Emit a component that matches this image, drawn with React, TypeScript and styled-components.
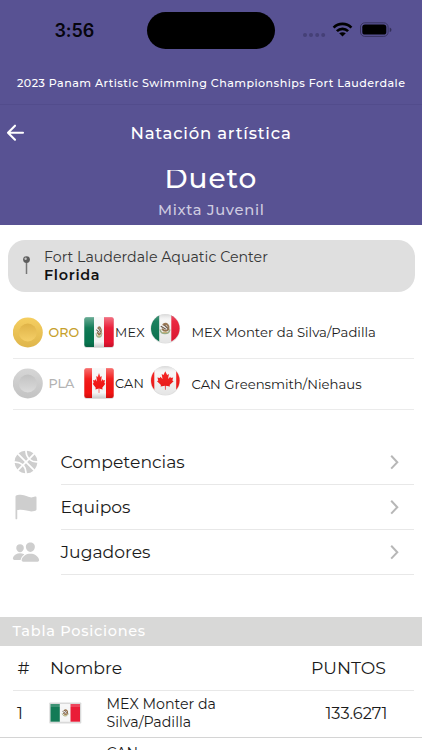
import React from "react";
import styled, { createGlobalStyle } from "styled-components";
import { IoBasketball, IoFlag, IoPeople } from "react-icons/io5";

const GlobalStyle = createGlobalStyle`
  * { box-sizing: border-box; }
  html, body { margin: 0; padding: 0; background: #fff; overflow: hidden; }
  body { font-family: Montserrat, Inter, "Open Sans", sans-serif; color: #1b1b1b; }
`;

const Screen = styled.div`
  width: 422px;
  height: 750px;
  overflow: hidden;
  background: #fff;
  display: flex;
  flex-direction: column;
`;

const Header = styled.header`
  flex: none;
  height: 225px;
  background: #585293;
  color: #fff;
`;

const StatusBar = styled.div`
  height: 60px;
  display: grid;
  grid-template-columns: 147px 128px 1fr;
  align-items: center;
`;

const Clock = styled.time`
  padding-left: 54.5px;
  color: #06050d;
  font-family: Inter, sans-serif;
  font-size: 18px;
  font-weight: 600;
  letter-spacing: -0.1px;
`;

const Island = styled.div`
  height: 37px;
  margin-top: 1px;
  border-radius: 19px;
  background: #000;
`;

const Indicators = styled.div`
  padding-left: 27px;
  svg { display: block; }
`;

const EventTitle = styled.div`
  height: 45px;
  padding: 1px 0 0 17px;
  display: flex;
  align-items: center;
  border-bottom: 1px solid #524c8c;
  font-size: 11.1px;
  font-weight: 500;
  letter-spacing: 0.46px;
  white-space: nowrap;
`;

const NavBar = styled.div`
  height: 56px;
  display: grid;
  grid-template-columns: 130.5px 1fr;
  align-items: center;
`;

const BackButton = styled.button`
  border: 0;
  padding: 0 0 0 6px;
  background: none;
  svg { display: block; }
`;

const NavTitle = styled.h1`
  margin: 0;
  font-size: 16.5px;
  font-weight: 500;
  letter-spacing: 0.78px;
`;

const Category = styled.div`
  height: 55.5px;
  margin-top: 8.5px;
  overflow: hidden;
`;

const CategoryName = styled.h2`
  margin: -6.5px 0 0 164.5px;
  font-size: 28px;
  line-height: 30px;
  font-weight: 500;
  letter-spacing: 0.925px;
`;

const CategoryKind = styled.div`
  margin: 6px 0 0 158px;
  line-height: 22px;
  color: #cfcce0;
  font-size: 14.7px;
  font-weight: 500;
  letter-spacing: 0.7px;
`;

const Venue = styled.section`
  flex: none;
  height: 52px;
  margin: 15px 7.5px 0;
  padding-left: 12px;
  border-radius: 17px;
  background: #dfdfdf;
  display: flex;
  gap: 11.5px;
  align-items: center;
  line-height: 18px;
`;

const VenueName = styled.div`
  color: #363636;
  font-size: 14.21px;
`;

const VenueCity = styled.div`
  color: #111;
  font-size: 14.4px;
  font-weight: 600;
  letter-spacing: 0.7px;
`;

const Podium = styled.section`
  flex: none;
  margin: 15px 8px 0 13px;
`;

const PodiumRow = styled.div`
  height: 51.5px;
  border-bottom: 1.5px solid #ebebeb;
  display: grid;
  grid-template-columns: 35.5px 35.5px 31px 35px 41.5px 1fr;
  align-items: center;
`;

const MedalLabel = styled.span<{ $tone: string }>`
  color: ${(p) => p.$tone};
  font-size: 12.7px;
  font-weight: 500;
`;

const CountryCode = styled.span`
  font-size: 12.8px;
  letter-spacing: 0.25px;
`;

const Badge = styled.div`
  height: 38.5px;
  svg { display: block; }
`;

const PairName = styled.span`
  font-size: 13.22px;
  white-space: nowrap;
`;

const Menu = styled.nav`
  flex: none;
  margin: 30px 8px 0 0;
`;

const MenuItem = styled.div`
  height: 45px;
  display: grid;
  grid-template-columns: 60.5px 1fr;
`;

const MenuIcon = styled.div`
  padding: 0 0 1.5px 12px;
  display: flex;
  align-items: center;
  color: #cecece;
`;

const MenuBody = styled.div`
  display: flex;
  align-items: center;
  justify-content: space-between;
  padding: 0 15.5px 1px 0;
  border-bottom: 1.4px solid #e8e8e8;
`;

const MenuLabel = styled.span`
  font-size: 17.2px;
`;

const SectionBand = styled.h3`
  flex: none;
  margin: 42px 0 0;
  height: 28.5px;
  padding-left: 12.5px;
  display: flex;
  align-items: center;
  background: #d8d8d7;
  color: #fff;
  font-size: 14.5px;
  font-weight: 500;
  letter-spacing: 0.74px;
`;

const TableHead = styled.div`
  flex: none;
  height: 45px;
  margin: 0 8px 0 13px;
  padding-left: 4.5px;
  display: grid;
  grid-template-columns: 32.5px 261px 1fr;
  align-items: center;
  border-bottom: 1.4px solid #e8e8e8;
  font-size: 17.3px;
`;

const TableRow = styled.div`
  flex: none;
  height: 47.5px;
  padding: 0 0 1px 17px;
  display: grid;
  grid-template-columns: 32px 57.5px 219px 1fr;
  align-items: center;
  border-bottom: 1.4px solid #d4d4d4;
`;

const Rank = styled.span`
  font-size: 16.2px;
`;

const FlagFrame = styled.span`
  svg { display: block; }
`;

const TeamName = styled.div`
  font-size: 14.2px;
  line-height: 18.2px;
`;

const Points = styled.span`
  font-size: 16.2px;
`;

const NextRow = styled.div`
  padding: 5.5px 0 0 106.5px;
  font-size: 14.2px;
  line-height: 18px;
`;

const StatusIcons = () => (
  <svg width="92" height="18" viewBox="302 20 92 18">
    <g fill="#454077">
      <circle cx="305" cy="34" r="2" />
      <circle cx="311" cy="34" r="2" />
      <circle cx="317.2" cy="34" r="2" />
      <circle cx="323.2" cy="34" r="2" />
    </g>
    <g fill="none" stroke="#000" strokeWidth="2.7">
      <path d="M333.6 26.6C338.6 21.7 346.4 21.7 351.4 26.6" />
      <path d="M336.9 30.1C340.1 27 344.9 27 348.1 30.1" />
    </g>
    <path d="M342.5 35.6L339.2 32.3C341.2 30.8 343.8 30.8 345.8 32.3Z" />
    <rect x="360.5" y="21.8" width="27.6" height="13.6" rx="4.3" fill="none" stroke="#38345f" />
    <rect x="362.3" y="23.6" width="24" height="10" rx="2.7" />
    <path d="M389.7 26.5C392 27.3 392 30.3 389.7 31.1Z" fill="#332f59" />
  </svg>
);

const BackArrow = () => (
  <svg width="19" height="19" viewBox="0 0 19 19" fill="none" stroke="#fff" strokeWidth="2.1" strokeLinecap="round" strokeLinejoin="round">
    <path d="M9 1.7L2 8.7L9 15.7M2.3 8.7H17" />
  </svg>
);

const Pin = () => (
  <svg width="13" height="22" viewBox="0 0 13 22">
    <path d="M6.5 6V19" stroke="#777" strokeWidth="1.5" />
    <circle cx="6.5" cy="4.6" r="3.4" fill="#5d5d5d" />
    <circle cx="5.6" cy="3.7" r="1.2" fill="#c5c5c5" />
  </svg>
);

const Medal = ({ id, rim, face }: { id: string; rim: [string, string]; face: [string, string] }) => (
  <svg width="31" height="31" viewBox="0 0 31 31">
    <defs>
      <linearGradient id={`${id}-rim`} x1="0" y1="0" x2="0" y2="1">
        <stop offset="0" stopColor={rim[0]} />
        <stop offset="1" stopColor={rim[1]} />
      </linearGradient>
      <linearGradient id={`${id}-face`} x1="0" y1="0" x2="0" y2="1">
        <stop offset="0" stopColor={face[0]} />
        <stop offset="1" stopColor={face[1]} />
      </linearGradient>
    </defs>
    <circle cx="14.8" cy="15.5" r="15" fill={`url(#${id}-rim)`} />
    <circle cx="14.8" cy="15.5" r="9" fill={`url(#${id}-face)`} />
  </svg>
);

type Country = "mx" | "ca";

const MapleLeaf = () => (
  <path
    d="M0-10L-2.2-6L-4.4-7.1L-3.3-1.6L-6-4.1L-6.6-2.6L-9.5-3.1L-8.5-.1L-10 .8L-5.2 4.8L-5.7 6.4L-.5 5.6L-.4 10H.4L.5 5.6L5.7 6.4L5.2 4.8L10 .8L8.5-.1L9.5-3.1L6.6-2.6L6-4.1L3.3-1.6L4.4-7.1L2.2-6Z"
    fill="#f31312"
  />
);

const Eagle = () => (
  <g fill="none" strokeLinecap="round">
    <path d="M-5 1.5C-4.4 6.6 4.4 6.6 5 1.5" stroke="#9bb089" strokeWidth="1.5" />
    <path d="M-1.6-4C1.6-6.4 4.6-3 3.6 .4C2.6 3-1 3-2.6 .8" stroke="#94704c" strokeWidth="2.2" />
    <path d="M-4-2.2L.4 .4M-.4-3.4L2.6-.4" stroke="#5d4938" strokeWidth="1.2" />
    <path d="M-2 4H2" stroke="#cbb47a" strokeWidth="1.4" />
  </g>
);

const SquareFlag = ({ country }: { country: Country }) => {
  const id = `square-${country}`;
  const mx = country === "mx";
  return (
    <svg width="31" height="33" viewBox="0 0 31 33">
      <defs>
        <clipPath id={`${id}-clip`}><rect x=".3" y="1.2" width="29.4" height="29.8" rx="2.2" /></clipPath>
        <linearGradient id={`${id}-gloss`} x1="0" y1="0" x2="0" y2="1">
          <stop offset="0" stopColor="#fff" stopOpacity=".4" />
          <stop offset=".35" stopColor="#fff" stopOpacity=".05" />
          <stop offset=".8" stopColor="#000" stopOpacity="0" />
          <stop offset="1" stopColor="#000" stopOpacity=".2" />
        </linearGradient>
      </defs>
      <rect x=".3" y="2" width="29.4" height="30" rx="2.5" fill="#bbb" opacity=".5" />
      <g clipPath={`url(#${id}-clip)`}>
        <path d="M0 1H31V32H0Z" fill="#f5f5f5" />
        <path d={mx ? "M0 1H10V32H0Z" : "M0 1H8V32H0Z"} fill={mx ? "#087650" : "#f31312"} />
        <path d={mx ? "M20 1H31V32H20Z" : "M22 1H31V32H22Z"} fill={mx ? "#e91531" : "#f31312"} />
        <g transform={mx ? "translate(15 16) scale(.58 .95)" : "translate(15 16) scale(.63 1)"}>
          {mx ? <Eagle /> : <MapleLeaf />}
        </g>
        <path d="M0 1H31V32H0Z" fill={`url(#${id}-gloss)`} />
      </g>
    </svg>
  );
};

const RoundFlag = ({ country }: { country: Country }) => {
  const id = `round-${country}`;
  const mx = country === "mx";
  return (
    <svg width="31" height="32" viewBox="0 0 31 32">
      <defs>
        <clipPath id={`${id}-clip`}><circle cx="15.3" cy="15.5" r="14.3" /></clipPath>
        <linearGradient id={`${id}-gloss`} x1="0" y1="0" x2="0" y2="1">
          <stop offset="0" stopColor="#999" stopOpacity=".45" />
          <stop offset=".25" stopColor="#fff" stopOpacity=".08" />
          <stop offset="1" stopColor="#000" stopOpacity=".08" />
        </linearGradient>
      </defs>
      <circle cx="15.3" cy="15.8" r="14.8" fill="#dedede" />
      <g clipPath={`url(#${id}-clip)`}>
        <path d="M0 0H31V32H0Z" fill="#f7f7f7" />
        <path d={mx ? "M0 0H9.2V32H0Z" : "M0 0H4.3V32H0Z"} fill={mx ? "#087650" : "#f31312"} />
        <path d={mx ? "M21.3 0H31V32H21.3Z" : "M26.2 0H31V32H26.2Z"} fill={mx ? "#e91531" : "#f31312"} />
        <g transform={mx ? "translate(15 15.5) scale(.95)" : "translate(15.3 15.5) scale(.83 .93)"}>
          {mx ? <Eagle /> : <MapleLeaf />}
        </g>
        <path d="M0 0H31V32H0Z" fill={`url(#${id}-gloss)`} />
      </g>
    </svg>
  );
};

const WideFlag = () => (
  <svg width="33" height="22" viewBox="0 0 33 22">
    <rect x=".3" y=".5" width="32" height="21" rx=".8" fill="#d9d9d9" />
    <path d="M1.5 2H31V19.7H1.5Z" fill="#f6f6f6" />
    <path d="M1.5 2H10.8V19.7H1.5Z" fill="#137b56" />
    <path d="M21.5 2H31V19.7H21.5Z" fill="#ea1c37" />
    <path d="M1.5 2H31V5H1.5Z" fill="#fff" opacity=".18" />
    <g transform="translate(16.2 10.9) scale(.6)"><Eagle /></g>
  </svg>
);

const Chevron = () => (
  <svg width="9" height="16" viewBox="0 0 9 16" fill="none" stroke="#b7b7b7" strokeWidth="2">
    <path d="M1.2 1.8L7.3 8.2L1.2 14.6" />
  </svg>
);

const pairs = [
  {
    country: "mx" as Country,
    label: "ORO",
    tone: "#c6a02c",
    code: "MEX",
    pair: "MEX Monter da Silva/Padilla",
    rim: ["#f5ce60", "#dfb64c"] as [string, string],
    face: ["#dfb347", "#f5cf68"] as [string, string],
  },
  {
    country: "ca" as Country,
    label: "PLA",
    tone: "#b3b3b3",
    code: "CAN",
    pair: "CAN Greensmith/Niehaus",
    rim: ["#d6d6d6", "#c3c3c3"] as [string, string],
    face: ["#c2c2c2", "#dbdbdb"] as [string, string],
  },
];

const links = [
  { label: "Competencias", icon: <IoBasketball size={28} /> },
  { label: "Equipos", icon: <IoFlag size={28} /> },
  { label: "Jugadores", icon: <IoPeople size={28} /> },
];

export default function App() {
  return (
    <>
      <GlobalStyle />
      <Screen>
        <Header>
          <StatusBar>
            <Clock>3:56</Clock>
            <Island />
            <Indicators><StatusIcons /></Indicators>
          </StatusBar>
          <EventTitle>2023 Panam Artistic Swimming Championships Fort Lauderdale</EventTitle>
          <NavBar>
            <BackButton aria-label="Atrás"><BackArrow /></BackButton>
            <NavTitle>Natación artística</NavTitle>
          </NavBar>
          <Category>
            <CategoryName>Dueto</CategoryName>
            <CategoryKind>Mixta Juvenil</CategoryKind>
          </Category>
        </Header>

        <Venue>
          <Pin />
          <div>
            <VenueName>Fort Lauderdale Aquatic Center</VenueName>
            <VenueCity>Florida</VenueCity>
          </div>
        </Venue>

        <Podium>
          {pairs.map((p) => (
            <PodiumRow key={p.code}>
              <Medal id={p.label} rim={p.rim} face={p.face} />
              <MedalLabel $tone={p.tone}>{p.label}</MedalLabel>
              <SquareFlag country={p.country} />
              <CountryCode>{p.code}</CountryCode>
              <Badge><RoundFlag country={p.country} /></Badge>
              <PairName>{p.pair}</PairName>
            </PodiumRow>
          ))}
        </Podium>

        <Menu>
          {links.map((l) => (
            <MenuItem key={l.label}>
              <MenuIcon>{l.icon}</MenuIcon>
              <MenuBody>
                <MenuLabel>{l.label}</MenuLabel>
                <Chevron />
              </MenuBody>
            </MenuItem>
          ))}
        </Menu>

        <SectionBand>Tabla Posiciones</SectionBand>
        <TableHead>
          <span>#</span>
          <span>Nombre</span>
          <span>PUNTOS</span>
        </TableHead>
        <TableRow>
          <Rank>1</Rank>
          <FlagFrame><WideFlag /></FlagFrame>
          <TeamName>
            <div>MEX Monter da</div>
            <div>Silva/Padilla</div>
          </TeamName>
          <Points>133.6271</Points>
        </TableRow>
        <NextRow>CAN</NextRow>
      </Screen>
    </>
  );
}
